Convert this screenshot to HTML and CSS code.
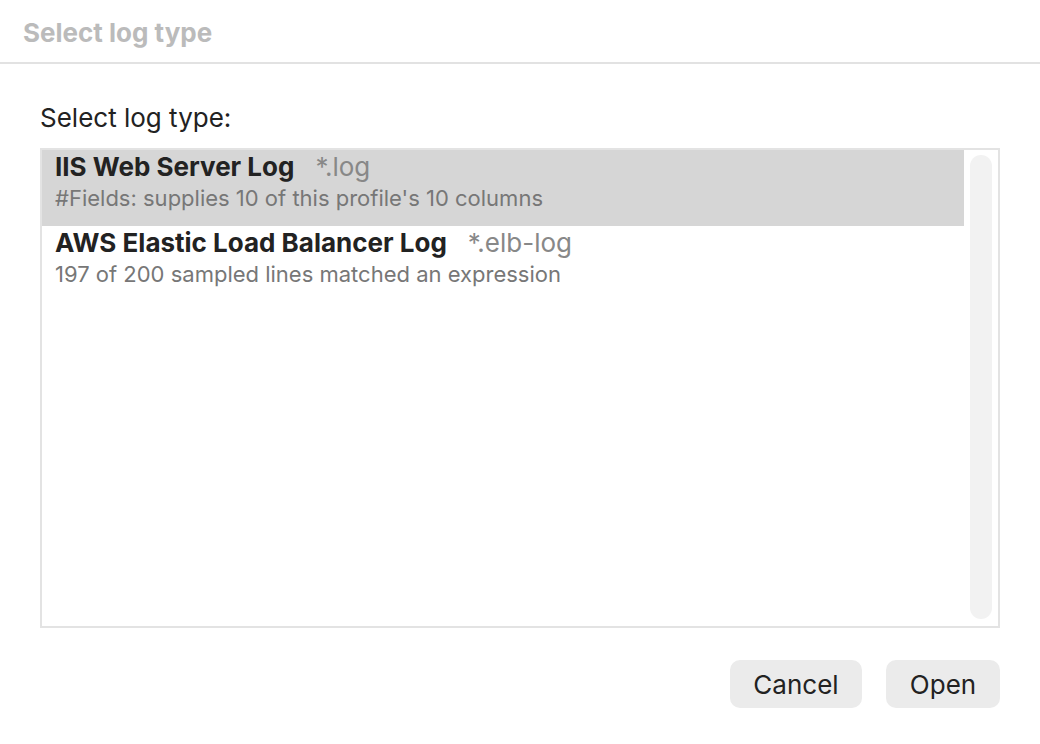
FILE: index.html
```html
<!DOCTYPE html>
<html>
<head>
<meta charset="utf-8">
<link rel="stylesheet" href="styles.css">
</head>
<body>
<div class="header"><span class="header-title">Select log type</span></div>
<div class="content">
  <div class="label">Select log type:</div>
  <div class="listbox">
    <div class="rows">
      <div class="row selected">
        <div class="row-title"><span class="name">IIS Web Server Log</span><span class="ext">*.log</span></div>
        <div class="row-sub">#Fields: supplies 10 of this profile's 10 columns</div>
      </div>
      <div class="row">
        <div class="row-title"><span class="name">AWS Elastic Load Balancer Log</span><span class="ext">*.elb-log</span></div>
        <div class="row-sub">197 of 200 sampled lines matched an expression</div>
      </div>
    </div>
    <div class="track"></div>
  </div>
  <div class="actions">
    <button class="btn btn-cancel">Cancel</button>
    <button class="btn btn-open">Open</button>
  </div>
</div>
</body>
</html>
```

FILE: styles.css
```css
html, body {
  margin: 0;
  padding: 0;
  background: #ffffff;
}
body {
  font-family: Inter, "Liberation Sans", sans-serif;
  color: #222222;
}
.header {
  box-sizing: border-box;
  height: 64px;
  padding: 18px 0 0 23px;
  border-bottom: 2px solid #e2e2e2;
}
.header-title {
  font-size: 26px;
  line-height: 30px;
  font-weight: 700;
  color: #bbbbbb;
  display: block;
}
.content {
  padding: 0 40px;
}
.label {
  margin-top: 39px;
  font-size: 26px;
  line-height: 30px;
  color: #222222;
}
.listbox {
  margin-top: 15px;
  box-sizing: border-box;
  height: 480px;
  border: 2px solid #e3e3e3;
  display: flex;
}
.rows {
  flex: 1;
}
.row {
  box-sizing: border-box;
  height: 76px;
  padding: 3px 13px 0 13px;
}
.row.selected {
  background: #d6d6d6;
}
.row-title {
  font-size: 26px;
  line-height: 28px;
  white-space: nowrap;
}
.name {
  font-weight: 700;
  color: #222222;
}
.ext {
  margin-left: 21px;
  color: #888888;
}
.row-sub {
  font-size: 22px;
  line-height: 34px;
  color: #777777;
  white-space: nowrap;
}
.track {
  width: 22px;
  margin: 5px 6px 7px 6px;
  background: #f2f2f2;
  border-radius: 11px;
}
.actions {
  margin-top: 32px;
  display: flex;
  justify-content: flex-end;
  gap: 24px;
}
.btn {
  height: 48px;
  border: none;
  border-radius: 10px;
  background: #ebebeb;
  font-family: Inter, "Liberation Sans", sans-serif;
  font-size: 26px;
  color: #222222;
  padding: 0;
}
.btn-cancel {
  width: 132px;
}
.btn-open {
  width: 114px;
}
```
